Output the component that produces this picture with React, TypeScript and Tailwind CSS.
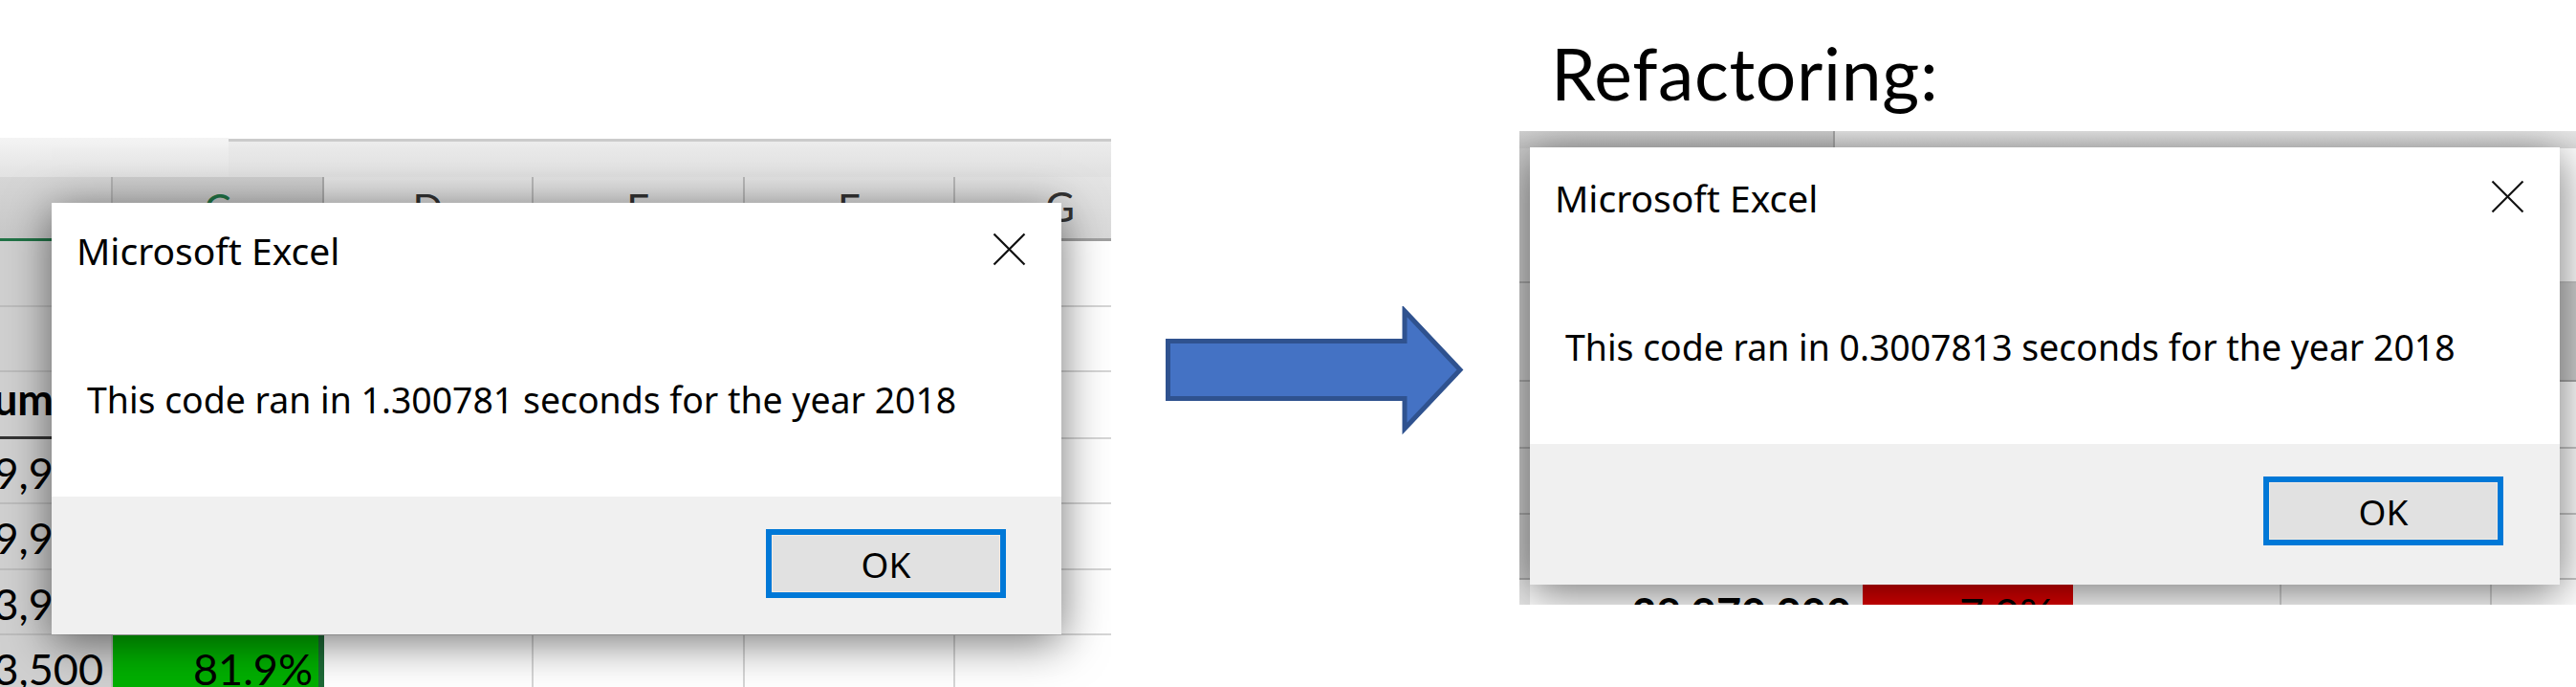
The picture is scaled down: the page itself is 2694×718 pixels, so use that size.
import React from "react";

const dialogFont = { fontFamily: '"Noto Sans", "Open Sans", sans-serif' };
const sheetFont = { fontFamily: 'Lato, "Noto Sans", sans-serif' };

function CloseX() {
  return (
    <svg viewBox="0 0 35 35" className="w-[35px] h-[35px] shrink-0" aria-hidden>
      <line x1="1.5" y1="1.5" x2="33.5" y2="33.5" stroke="#111" strokeWidth="2.2" />
      <line x1="33.5" y1="1.5" x2="1.5" y2="33.5" stroke="#111" strokeWidth="2.2" />
    </svg>
  );
}

function LeftDialog() {
  return (
    <div
      className="absolute left-[54px] top-[68px] w-[1056px] h-[451px] flex flex-col bg-[#f0f0f0] shadow-[0_8px_44px_rgba(0,0,0,0.55)]"
      style={dialogFont}
    >
      <div className="h-[307px] bg-white flex flex-col pl-[26px] pr-[37px] pt-[30px]">
        <div className="flex justify-between items-start">
          <span className="text-[39px] leading-none text-black">Microsoft Excel</span>
          <div className="mt-[1px]">
            <CloseX />
          </div>
        </div>
        <p className="ml-[11px] mt-[118px] text-[37.4px] leading-none text-black whitespace-nowrap">
          This code ran in 1.300781 seconds for the year 2018
        </p>
      </div>
      <div className="flex-1 flex justify-end items-start pt-[34px] pr-[58px]">
        <div className="w-[251px] h-[72px] border-[6px] border-[#0078d7] bg-[#e1e1e1] shadow-[inset_0_0_0_1px_#f3ebe3] flex items-center justify-center text-[37px] leading-none text-black">
          OK
        </div>
      </div>
    </div>
  );
}

function RightDialog() {
  return (
    <div
      className="absolute left-[11px] top-[17px] w-[1077px] h-[457px] flex flex-col bg-[#f0f0f0] shadow-[0_8px_44px_rgba(0,0,0,0.55)]"
      style={dialogFont}
    >
      <div className="h-[310px] bg-white flex flex-col pl-[26px] pr-[37px] pt-[33px]">
        <div className="flex justify-between items-start">
          <span className="text-[39px] leading-none text-black">Microsoft Excel</span>
          <div className="mt-[1px]">
            <CloseX />
          </div>
        </div>
        <p className="ml-[11px] mt-[118px] text-[37.4px] leading-none text-black whitespace-nowrap">
          This code ran in 0.3007813 seconds for the year 2018
        </p>
      </div>
      <div className="flex-1 flex justify-end items-start pt-[34px] pr-[59px]">
        <div className="w-[251px] h-[72px] border-[6px] border-[#0078d7] bg-[#e1e1e1] shadow-[inset_0_0_0_1px_#f3ebe3] flex items-center justify-center text-[37px] leading-none text-black">
          OK
        </div>
      </div>
    </div>
  );
}

const leftRows = [
  { h: "h-[69px]", b: "" },
  { h: "h-[68px]", b: "" },
  { h: "h-[70px]", b: "Total Daily Volume" },
  { h: "h-[68px]", b: "69,900" },
  { h: "h-[69px]", b: "19,900" },
  { h: "h-[68px]", b: "43,900" },
  { h: "h-[70px]", b: "33,500" },
];

function LeftSheet() {
  return (
    <div className="relative w-[1162px] h-[574px] overflow-hidden bg-white shrink-0 mt-[144px]" style={sheetFont}>
      {/* ribbon bottom strip */}
      <div className="h-[41px] flex">
        <div className="w-[239px] bg-gradient-to-b from-[#f4f4f4] to-[#e2e2e2]" />
        <div className="flex-1 bg-gradient-to-b from-[#ececec] to-[#e0e0e0] border-t-[3px] border-[#cbcbcb] mt-[1px]" />
      </div>
      <div className="w-[1220px]">
        {/* column header */}
        <div className="h-[67px] grid grid-cols-[118px_221px_219px_221px_220px_221px] text-[42px] leading-none text-center">
          <div className="bg-gradient-to-b from-[#d6d6d6] to-[#c8c8c8] border-r-2 border-[#b2b2b2] border-b-[3px] border-b-[#217346]" />
          <div className="bg-gradient-to-b from-[#cfcfcf] to-[#c2c2c2] border-r-2 border-[#a9a9a9] border-b-[3px] border-b-[#217346] pt-[12px] text-[#217346]">C</div>
          <div className="bg-gradient-to-b from-[#e4e4e4] to-[#d8d8d8] border-r-2 border-[#b8b8b8] border-b-[3px] border-b-[#a0a0a0] pt-[12px] text-[#333]">D</div>
          <div className="bg-gradient-to-b from-[#e4e4e4] to-[#d8d8d8] border-r-2 border-[#b8b8b8] border-b-[3px] border-b-[#a0a0a0] pt-[12px] text-[#333]">E</div>
          <div className="bg-gradient-to-b from-[#e4e4e4] to-[#d8d8d8] border-r-2 border-[#b8b8b8] border-b-[3px] border-b-[#a0a0a0] pt-[12px] text-[#333]">F</div>
          <div className="bg-gradient-to-b from-[#e4e4e4] to-[#d8d8d8] border-r-2 border-[#b8b8b8] border-b-[3px] border-b-[#a0a0a0] pt-[10px] text-[#333]">G</div>
        </div>
        {leftRows.map((r, i) => (
          <div
            key={i}
            className={`${r.h} grid grid-cols-[118px_221px_219px_221px_220px_221px] text-[45px] leading-none text-black`}
          >
            <div
              className={
                i === 2
                  ? "bg-[#d0d0d0] border-r-2 border-[#bcbcbc] border-b-[3px] border-b-[#333] overflow-hidden whitespace-nowrap flex justify-end pr-[36px] pt-[6px] font-bold"
                  : "bg-[#d0d0d0] border-r-2 border-b-2 border-[#bcbcbc] overflow-hidden whitespace-nowrap flex justify-end pr-[8px] pt-[13px]"
              }
            >
              {r.b}
            </div>
            <div
              className={
                i === 6
                  ? "bg-[#00b000] border-r-[6px] border-r-[#1d6b37] flex justify-end pr-[6px] pt-[13px]"
                  : "bg-white border-r-2 border-b-2 border-[#d6d6d6]"
              }
            >
              {i === 6 ? "81.9%" : ""}
            </div>
            <div className="bg-white border-r-2 border-b-2 border-[#d6d6d6]" />
            <div className="bg-white border-r-2 border-b-2 border-[#d6d6d6]" />
            <div className="bg-white border-r-2 border-b-2 border-[#d6d6d6]" />
            <div className="bg-white border-r-2 border-b-2 border-[#d6d6d6]" />
          </div>
        ))}
      </div>
      <LeftDialog />
    </div>
  );
}

const rightRows = ["h-[141px]", "h-[103px]", "h-[70px]", "h-[69px]", "h-[68px]", "h-[70px]"];

function RightSheet() {
  return (
    <div className="relative w-[1105px] h-[495px] overflow-hidden bg-white mt-[23px]" style={sheetFont}>
      <div className="h-[18px] flex">
        <div className="w-[330px] bg-gradient-to-b from-[#d2d2d2] to-[#c4c4c4] border-r-2 border-[#a8a8a8]" />
        <div className="flex-1 bg-gradient-to-b from-[#e8e8e8] to-[#dcdcdc]" />
      </div>
      {rightRows.map((h, i) => (
        <div
          key={i}
          className={`${h} grid grid-cols-[11px_348px_220px_218px_220px_88px] text-[45px] leading-none text-black`}
        >
          <div className={i === 5 ? "bg-[#e8e8e8]" : "bg-[#cdcdcd] border-b-2 border-[#a8a8a8]"} />
          <div
            className={
              i === 5
                ? "bg-white flex justify-end pr-[12px] pt-[13px] font-bold whitespace-nowrap overflow-hidden"
                : "bg-white border-r-2 border-b-2 border-[#d6d6d6]"
            }
          >
            {i === 5 ? "38,970,900" : ""}
          </div>
          <div
            className={
              i === 5
                ? "bg-[#dd0000] flex justify-end pr-[20px] pt-[13px]"
                : "bg-white border-r-2 border-b-2 border-[#d6d6d6]"
            }
          >
            {i === 5 ? "7.0%" : ""}
          </div>
          <div className="bg-white border-r-2 border-b-2 border-[#d6d6d6]" />
          <div className="bg-white border-r-2 border-b-2 border-[#d6d6d6]" />
          <div className={i === 1 ? "bg-[#cfcfcf] border-b-2 border-[#a8a8a8]" : "bg-white border-b-2 border-[#c8c8c8]"} />
        </div>
      ))}
      <RightDialog />
    </div>
  );
}

function Arrow() {
  return (
    <svg width="320" height="136" viewBox="0 0 320 136" className="shrink-0 ml-[54px] mt-[320px]" aria-hidden>
      <polygon
        points="5.5,36.5 253,36.5 253,5 311,66.5 253,128 253,96.5 5.5,96.5"
        fill="#4472c4"
        stroke="#2f528f"
        strokeWidth="5"
        strokeLinejoin="miter"
      />
    </svg>
  );
}

export default function App() {
  return (
    <div className="w-[2694px] h-[718px] bg-white overflow-hidden flex items-start">
      <LeftSheet />
      <Arrow />
      <div className="ml-[53px] flex flex-col">
        <h1 className="ml-[33px] mt-[39px] text-[75px] leading-none font-normal tracking-[0.7px] text-black" style={sheetFont}>
          Refactoring:
        </h1>
        <RightSheet />
      </div>
    </div>
  );
}
